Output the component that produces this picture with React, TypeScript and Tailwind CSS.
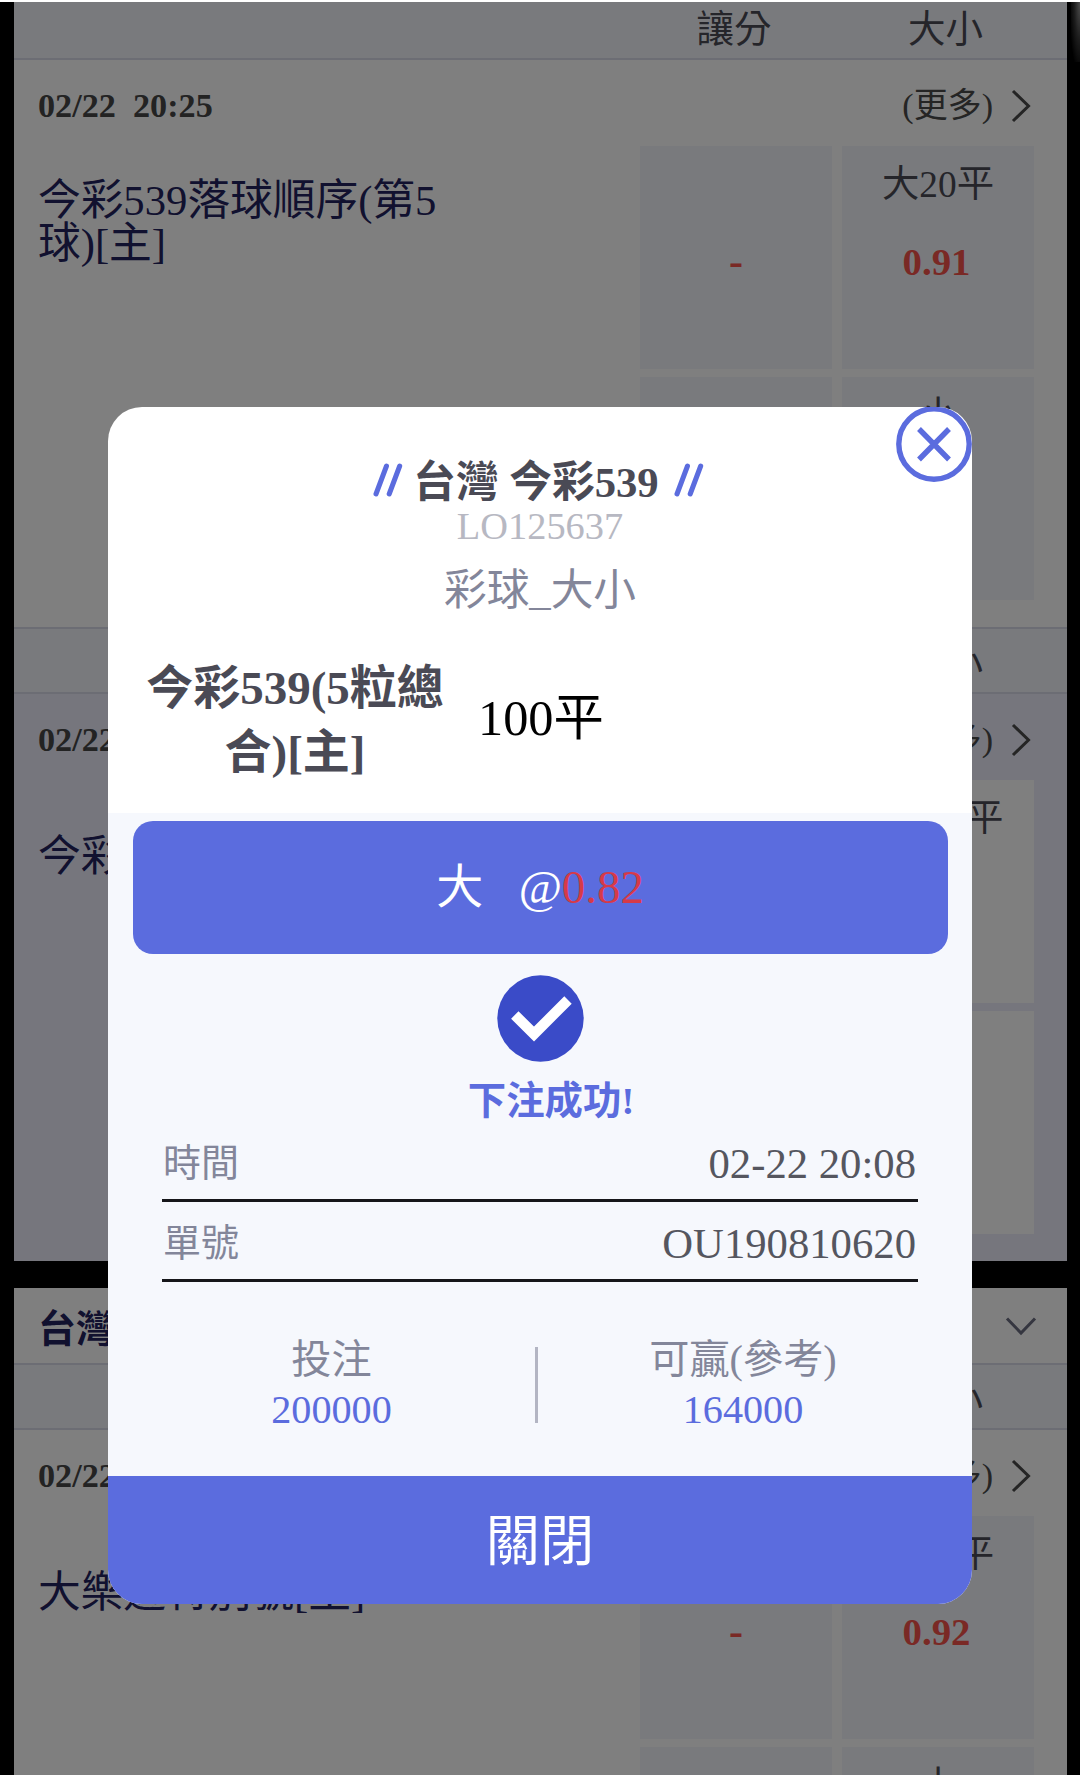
import React from "react";

type Bet = { label?: string; odds?: string };

function ColumnHeader({ first = false }: { first?: boolean }) {
  return (
    <div
      className={
        first
          ? "flex h-[58px] shrink-0 items-end justify-end overflow-hidden border-b-2 border-[#d9dbe8] bg-[#f3f5fb] pr-[15px]"
          : "flex h-[67px] shrink-0 items-end justify-end overflow-hidden border-y-2 border-[#d9dbe8] bg-[#f3f5fb] pr-[15px]"
      }
    >
      <span className="w-[212px] text-center text-[37.5px] leading-[57px] text-[#4a4a55]">讓分</span>
      <span className="w-[212px] pr-px text-center text-[37.5px] leading-[57px] text-[#4a4a55]">大小</span>
    </div>
  );
}

function Cell({ bet, highlight }: { bet: Bet; highlight: boolean }) {
  return (
    <div
      className={
        highlight
          ? "flex h-[223px] w-[192px] flex-col items-center bg-white pt-[19px]"
          : "flex h-[223px] w-[192px] flex-col items-center bg-[#f3f5fb] pt-[19px]"
      }
    >
      <span className="h-[38px] text-[37.4px] leading-[40px] text-[#4a4a55]">{bet.label}</span>
      {bet.odds === "-" ? (
        <span className="mt-[39px] h-[38px] text-[42px] font-bold leading-[38px] text-[#f4524a]">-</span>
      ) : (
        <span className="mt-[40px] h-[38px] pr-[3px] text-[38.8px] font-bold leading-[38px] text-[#f4524a]">
          {bet.odds}
        </span>
      )}
    </div>
  );
}

function Match({
  time,
  title,
  bets,
  highlight = false,
}: {
  time: string;
  title: React.ReactNode;
  bets: Bet[];
  highlight?: boolean;
}) {
  return (
    <div className={highlight ? "h-[567px] shrink-0 bg-[#ecedfb]" : "h-[567px] shrink-0 bg-white"}>
      <div className="flex h-[86px] items-center justify-between pl-[24px] pr-[36px] pt-[6px]">
        <span className="whitespace-pre text-[34.2px] font-bold leading-[34px] text-[#464646]">{time}</span>
        <span className="flex items-center gap-[18px] text-[34px] leading-[34px] text-[#4a4a4a]">
          (更多)
          <svg width="20" height="34" viewBox="0 0 20 34" fill="none" stroke="currentColor" strokeWidth="3">
            <path d="M2 2L17.5 17L2 32" />
          </svg>
        </span>
      </div>
      <div className="flex justify-between pl-[24px] pr-[33px]">
        <div className="flex h-[148px] items-center pt-[4px] text-[42.7px] leading-[43px] text-[#22225e]">
          <div>{title}</div>
        </div>
        <div className="grid grid-cols-2 gap-x-[10px] gap-y-[8px]">
          {bets.map((b, i) => (
            <Cell key={i} bet={b} highlight={highlight} />
          ))}
        </div>
      </div>
    </div>
  );
}

function Slashes() {
  return (
    <svg
      className="mb-[6px]"
      width="30"
      height="34"
      viewBox="0 0 30 34"
      fill="none"
      stroke="#5b6cde"
      strokeWidth="5"
      strokeLinecap="round"
    >
      <path d="M3 31L13.5 3M16.2 31L26.7 3" />
    </svg>
  );
}

function Detail({ label, value }: { label: string; value: string }) {
  return (
    <div className="flex h-[80px] items-center justify-between border-b-[3px] border-[#16161a] pl-px pr-[2px] pt-[6px]">
      <span className="pb-[2px] text-[38px] text-[#83869a]">{label}</span>
      <span className="text-[42.7px] text-[#55565f]">{value}</span>
    </div>
  );
}

function Receipt() {
  return (
    <div className="relative flex h-[1197px] w-[864px] flex-col overflow-hidden rounded-[34px] bg-white">
      <button className="absolute right-0 top-[-1px] h-[76px] w-[76px]">
        <svg width="76" height="76" viewBox="0 0 76 76" fill="none" stroke="#5b6cde" strokeWidth="5.4">
          <circle cx="38" cy="38" r="35.2" fill="#fff" />
          <path d="M23 23L53 53.5M53 23L23 53.5" />
        </svg>
      </button>
      <div className="flex h-[406px] shrink-0 flex-col items-center pt-[54px]">
        <div className="flex h-[43px] items-center pr-[3px] text-[42.7px] font-bold leading-[43px] text-[#4a4a55]">
          <Slashes />
          <span className="ml-[10px] mr-[15px]">台灣 今彩539</span>
          <Slashes />
        </div>
        <div className="mt-[2px] text-[38.4px] leading-[40px] text-[#b7b8c2]">LO125637</div>
        <div className="mt-[23px] text-[42.7px] leading-[43px] text-[#83869a]">彩球_大小</div>
        <div className="mt-[44px] flex w-full items-center pl-[36px]">
          <div className="w-[302px] whitespace-nowrap text-center text-[47px] font-bold leading-[64px] text-[#4a4a55]">
            今彩539(5粒總
            <br />
            合)[主]
          </div>
          <div className="ml-[32px] pb-[4px] text-[50.3px] leading-[64px] text-black">100平</div>
        </div>
      </div>
      <div className="flex h-[663px] shrink-0 flex-col items-center bg-[#f6f8fd] pt-[8px]">
        <div className="flex h-[133px] w-[815px] items-center justify-center whitespace-pre rounded-[20px] bg-[#5b6cde] text-[47px] leading-[47px] text-white">
          <span>
            {"大   "}
            <span className="italic">@</span>
            <span className="text-[#d63a48]">0.82</span>
          </span>
        </div>
        <svg className="mt-[21px]" width="87" height="87" viewBox="0 0 87 87" fill="none">
          <circle cx="43.5" cy="43.5" r="43.2" fill="#3a4bc8" />
          <path d="M17.8 40L37 59L71 25" stroke="#fff" strokeWidth="10.5" />
        </svg>
        <div className="mt-[18px] pl-[22px] text-[38.4px] font-bold leading-[42px] text-[#5b6cde]">下注成功!</div>
        <div className="flex w-[756px] flex-col leading-[70px]">
          <Detail label="時間" value="02-22 20:08" />
          <Detail label="單號" value="OU190810620" />
        </div>
        <div className="mt-[53px] flex h-[100px] w-full items-center pl-[20px] text-[40.2px] leading-[50px]">
          <div className="flex w-[407px] flex-col items-center">
            <span className="text-[#83869a]">投注</span>
            <span className="text-[#5b6cde]">200000</span>
          </div>
          <div className="h-[76px] w-[3px] bg-[#b3b5c3]" />
          <div className="flex w-[410px] flex-col items-center">
            <span className="text-[#83869a]">可贏(參考)</span>
            <span className="text-[#5b6cde]">164000</span>
          </div>
        </div>
      </div>
      <button className="flex flex-1 items-center justify-center bg-[#5b6cde] pt-[3px] text-[54.2px] leading-[54px] text-white">
        關閉
      </button>
    </div>
  );
}

export default function App() {
  return (
    <div className="h-[1787px] w-[1080px] overflow-hidden bg-white pt-[2px] font-['Liberation_Serif','Noto_Sans_CJK_TC',serif]">
      <div className="relative h-[1773px] overflow-hidden bg-black pl-[14px] pr-[13px]">
        <section className="flex flex-col">
          <ColumnHeader first />
          <Match
            time="02/22  20:25"
            title={
              <>
                今彩539落球順序(第5
                <br />
                球)[主]
              </>
            }
            bets={[{ odds: "-" }, { label: "大20平", odds: "0.91" }, {}, { label: "小" }]}
          />
          <ColumnHeader />
          <Match
            highlight
            time="02/22  20:25"
            title="今彩539(5粒總合)[主]"
            bets={[{ odds: "-" }, { label: "大100平" }, {}, {}]}
          />
        </section>
        <section className="mt-[27px] flex flex-col">
          <div className="flex h-[75px] items-center justify-between bg-white pl-[24px] pr-[30px]">
            <span className="pt-[7px] text-[38px] font-bold leading-[38px] text-[#22225e]">台灣 大樂透</span>
            <svg width="32" height="20" viewBox="0 0 32 20" fill="none" stroke="#6a6c80" strokeWidth="3">
              <path d="M2 2.5L16 17L30 2.5" />
            </svg>
          </div>
          <ColumnHeader />
          <Match
            time="02/22  20:25"
            title="大樂透特別號[主]"
            bets={[{ odds: "-" }, { label: "大25平", odds: "0.92" }, {}, { label: "小" }]}
          />
        </section>
        <div className="absolute right-0 top-0 h-[60px] w-[9px] bg-[radial-gradient(ellipse_at_top_right,#9a9a9a_0%,#3a3a3a_45%,#000_85%)]" />
        <div className="absolute inset-0 flex items-start justify-center bg-black/50 pt-[405px]">
          <Receipt />
        </div>
      </div>
    </div>
  );
}
